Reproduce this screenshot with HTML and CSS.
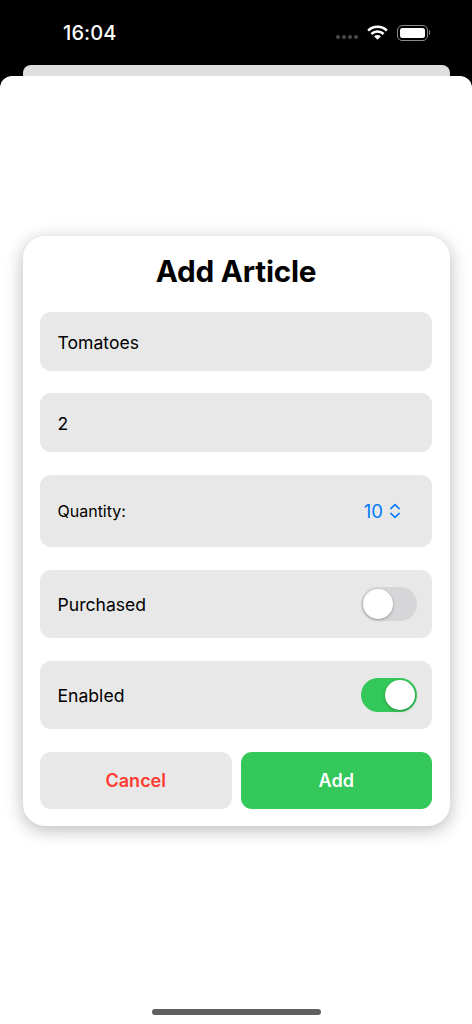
FILE: index.html
```html
<!DOCTYPE html>
<html lang="en">
<head>
<meta charset="utf-8">
<title>Add Article</title>
<link rel="stylesheet" href="styles.css">
</head>
<body>
<div class="screen">
  <header class="status">
    <span class="time">16:04</span>
    <div class="status-icons">
      <div class="dots"><i></i><i></i><i></i><i></i></div>
      <svg class="wifi" width="21" height="15" viewBox="0 0 22 16"><path fill="none" stroke="#fff" stroke-width="2.7" d="M1 6a14.4 14.4 0 0 1 20 0M4.5 9.6a9.3 9.3 0 0 1 13 0"/><path fill="#fff" d="M11 15.8 7.4 12.2a5.1 5.1 0 0 1 7.2 0z"/></svg>
      <div class="battery"><div class="battery-body"><div class="battery-fill"></div></div><div class="battery-cap"></div></div>
    </div>
  </header>
  <div class="back-sheet"></div>
  <main class="sheet">
    <section class="card">
      <h1 class="title">Add Article</h1>
      <div class="row field">Tomatoes</div>
      <div class="row field">2</div>
      <div class="row picker">
        <span class="picker-label">Quantity:</span>
        <span class="picker-value">10
          <svg class="chev" width="12" height="16" viewBox="0 0 12 16"><path fill="none" stroke="#007aff" stroke-width="1.5" stroke-linecap="round" stroke-linejoin="round" d="M1.8 5.6 6 1.6l4.2 4M1.8 10.4 6 14.4l4.2-4"/></svg>
        </span>
      </div>
      <div class="row toggle-row">
        <span>Purchased</span>
        <div class="switch"><div class="knob"></div></div>
      </div>
      <div class="row toggle-row">
        <span>Enabled</span>
        <div class="switch on"><div class="knob"></div></div>
      </div>
      <div class="actions">
        <div class="btn cancel">Cancel</div>
        <div class="btn add">Add</div>
      </div>
    </section>
    <div class="home-indicator"></div>
  </main>
</div>
</body>
</html>
```

FILE: styles.css
```css
* { box-sizing: border-box; }
html, body { margin: 0; padding: 0; background: #000; }
body { font-family: Inter, "Liberation Sans", sans-serif; color: #000; }
.screen { width: 472px; height: 1024px; display: flex; flex-direction: column; overflow: hidden; }

.status { height: 65px; flex: none; display: flex; justify-content: space-between; align-items: flex-start; padding: 21px 42px 0 63px; color: #fff; }
.time { font-size: 20px; font-weight: 500; line-height: 24px; letter-spacing: 0.1px; }
.status-icons { display: flex; align-items: flex-start; }
.dots { display: flex; gap: 2px; margin: 14px 9px 0 0; }
.dots i { width: 4px; height: 4px; border-radius: 50%; background: #4a4a4a; }
.wifi { margin: 4px 9px 0 0; }
.battery { display: flex; align-items: center; margin-top: 4px; }
.battery-body { width: 31px; height: 15.5px; border: 1.2px solid #8a8a8a; border-radius: 5px; padding: 2px; }
.battery-fill { width: 100%; height: 100%; background: #fff; border-radius: 2.5px; }
.battery-cap { width: 1.5px; height: 5px; margin-left: 1px; background: #8a8a8a; border-radius: 0 2px 2px 0; }

.back-sheet { height: 11px; flex: none; margin: 0 22.5px; background: #dfdfdf; border-radius: 8px 8px 0 0; }
.sheet { flex: 1; background: #fff; border-radius: 12px 12px 0 0; padding: 160px 22.5px 0; display: flex; flex-direction: column; }

.card { height: 590px; flex: none; background: #fff; border-radius: 22px; padding: 15px 17.5px 17px; box-shadow: 0 4px 18px rgba(0,0,0,.28); display: flex; flex-direction: column; }
.title { margin: 0 0 21px; font-size: 29.7px; line-height: 41px; font-weight: 700; text-align: center; letter-spacing: -0.2px; height: 40px; }

.row { background: #e8e8e8; border-radius: 11px; display: flex; align-items: center; padding: 0 17.5px; font-size: 17.6px; }
.field { height: 59px; margin-bottom: 22px; padding-top: 1px; }
.field + .field { margin-bottom: 23px; }
.picker { height: 72px; margin-bottom: 23px; justify-content: space-between; padding-right: 31px; }
.picker-label { font-size: 16px; }
.picker-value { display: flex; align-items: center; gap: 6px; color: #007aff; font-size: 18.5px; }
.toggle-row { height: 68px; margin-bottom: 23px; justify-content: space-between; padding-right: 15px; }

.switch { width: 56px; height: 34px; border-radius: 17px; background: #d6d6d9; padding: 2px; display: flex; }
.switch.on { background: #34c759; justify-content: flex-end; }
.knob { width: 30px; height: 30px; border-radius: 50%; background: #fff; box-shadow: 0 1px 3px rgba(0,0,0,.3); }

.actions { display: flex; gap: 9px; }
.btn { flex: 1; height: 57px; padding-bottom: 1px; border-radius: 11px; display: flex; align-items: center; justify-content: center; font-size: 18px; font-weight: 600; }
.cancel { background: #e8e8e8; color: #ff3b30; }
.add { background: #34c759; color: #fff; }

.home-indicator { width: 169px; height: 5.5px; margin: 183px auto 0; background: #606060; border-radius: 3px; flex: none; }
```
